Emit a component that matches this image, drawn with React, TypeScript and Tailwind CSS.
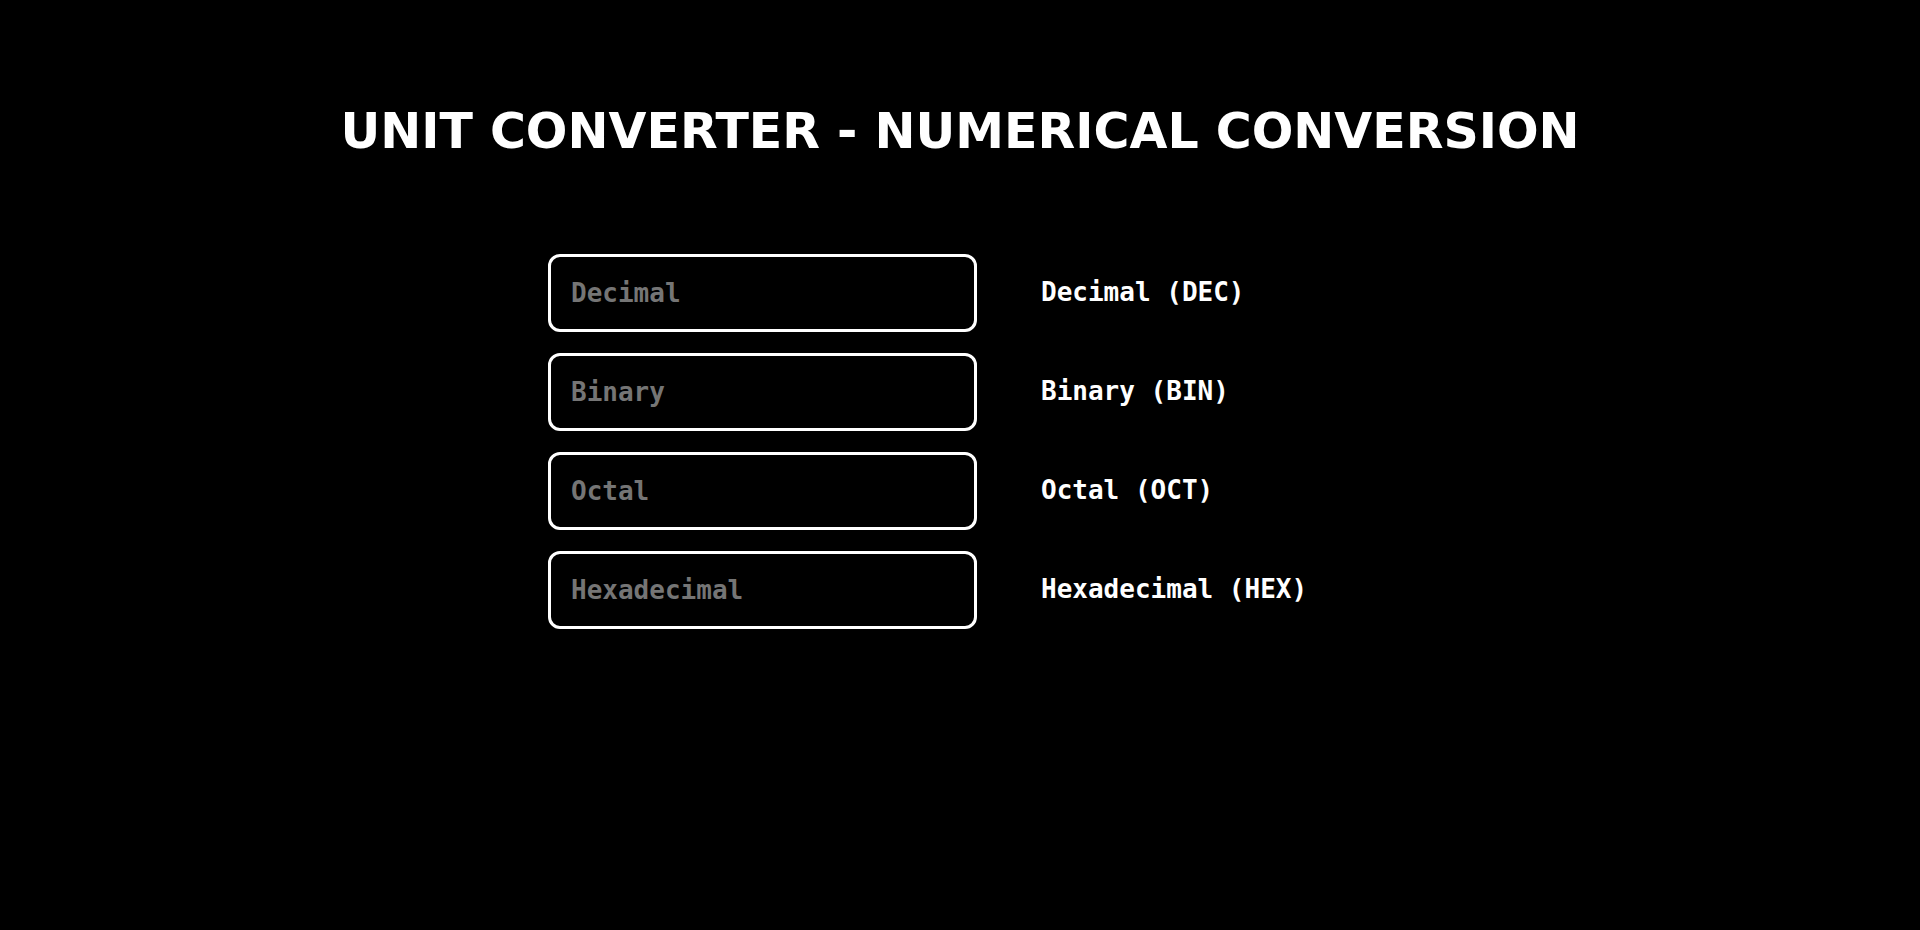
import React from "react";

const rows = [
  { ph: "Decimal", label: "Decimal (DEC)" },
  { ph: "Binary", label: "Binary (BIN)" },
  { ph: "Octal", label: "Octal (OCT)" },
  { ph: "Hexadecimal", label: "Hexadecimal (HEX)" },
];

export default function App() {
  return (
    <div className="min-h-[930px] w-full bg-black text-white">
      <h1
        className="pt-[95px] text-center text-[49px] font-bold text-white"
        style={{ fontFamily: '"DejaVu Sans", Verdana, sans-serif' }}
      >
        UNIT CONVERTER - NUMERICAL CONVERSION
      </h1>
      <div className="mx-auto mt-[85px] flex w-[824px] flex-col gap-[21px]">
        {rows.map((r) => (
          <div key={r.ph} className="flex items-center gap-[64px]">
            <input
              type="text"
              placeholder={r.ph}
              className="h-[78px] w-[429px] rounded-[12px] border-[3px] border-white bg-black px-[20px] text-[26px] font-bold text-white outline-none placeholder:text-[#757575]"
              style={{ fontFamily: '"DejaVu Sans Mono", monospace' }}
            />
            <span
              className="text-[26px] font-bold text-white"
              style={{ fontFamily: '"DejaVu Sans Mono", monospace' }}
            >
              {r.label}
            </span>
          </div>
        ))}
      </div>
    </div>
  );
}
